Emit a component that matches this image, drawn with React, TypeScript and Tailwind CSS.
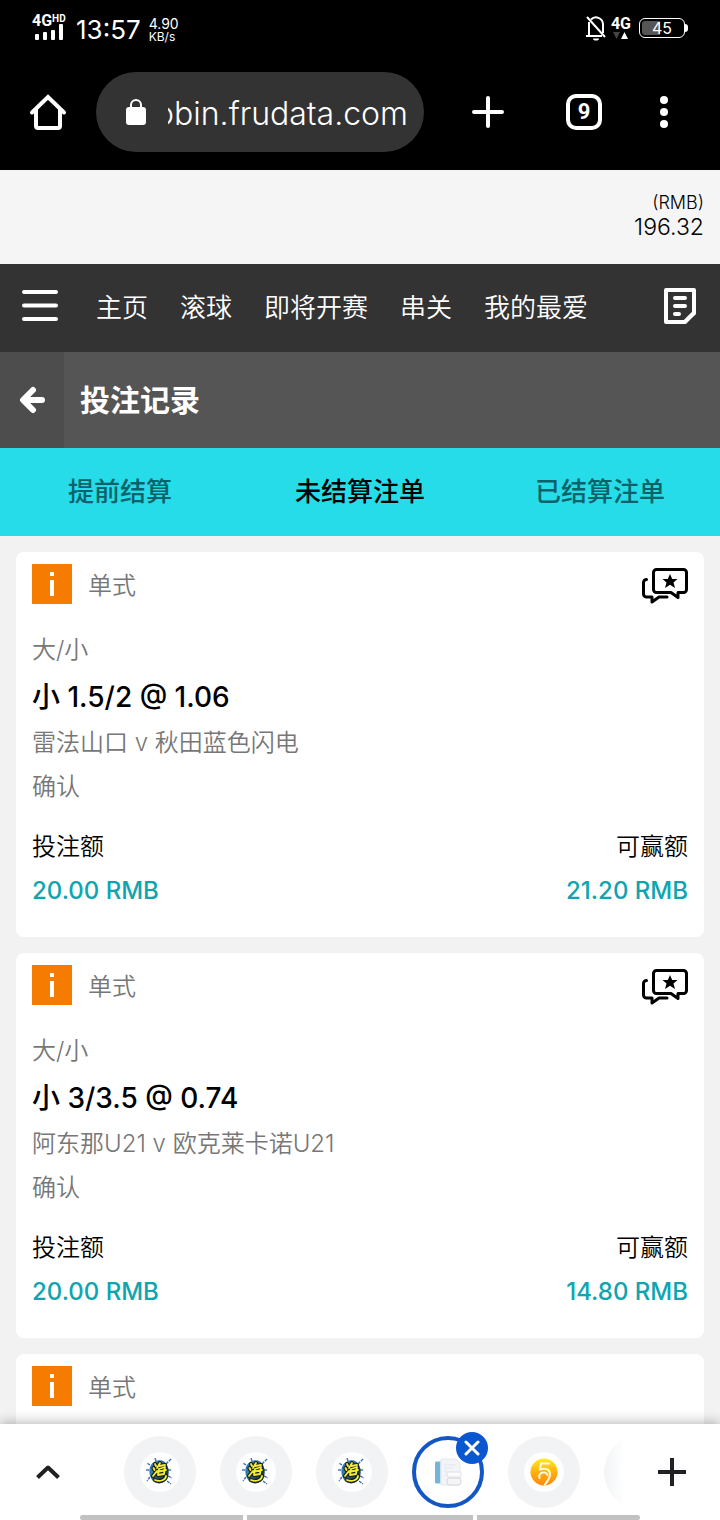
import type { ReactNode } from "react";

type Bet = {
  id: number;
  type: string;
  market: string;
  pick: string;
  match: string;
  status: string;
  stake: string;
  win: string;
};

const bets: Bet[] = [
  {
    id: 1,
    type: "单式",
    market: "大/小",
    pick: "小 1.5/2 @ 1.06",
    match: "雷法山口 v 秋田蓝色闪电",
    status: "确认",
    stake: "20.00 RMB",
    win: "21.20 RMB",
  },
  {
    id: 2,
    type: "单式",
    market: "大/小",
    pick: "小 3/3.5 @ 0.74",
    match: "阿东那U21 v 欧克莱卡诺U21",
    status: "确认",
    stake: "20.00 RMB",
    win: "14.80 RMB",
  },
];

const navItems = ["主页", "滚球", "即将开赛", "串关", "我的最爱"];
const tabs = ["提前结算", "未结算注单", "已结算注单"];

function StatusBar() {
  return (
    <div className="flex h-14 items-center justify-between px-8 text-white">
      <div className="flex items-center">
        <div className="flex w-9 flex-col">
          <div className="flex h-3 items-start font-['Roboto'] font-bold">
            <span className="text-[16px] leading-3">4G</span>
            <span className="text-[10px] leading-2">HD</span>
          </div>
          <svg width="36" height="14" viewBox="0 0 36 14" fill="#fff" className="overflow-visible">
            <rect x="3" y="7" width="4" height="6" rx="1" />
            <rect x="11" y="5" width="4" height="8" rx="1" />
            <rect x="19" y="3" width="4" height="10" rx="1" />
            <rect x="27" y="-3" width="4" height="16" rx="1" />
          </svg>
        </div>
        <span className="ml-2 mt-1 text-[26px] leading-7">13:57</span>
        <div className="ml-2 mt-1 flex flex-col">
          <span className="text-[14px] leading-[13px]">4.90</span>
          <span className="text-[12px] leading-[13px]">KB/s</span>
        </div>
      </div>
      <div className="flex items-center gap-1">
        <svg width="22" height="26" viewBox="0 0 22 26" fill="none" stroke="#fff" strokeWidth="2">
          <path d="M6 4.500A7 7 0 0 1 18 9v9M4 7v13M1 21h16M2 2l18 20" />
          <path d="M8 23.500h6a3 2 0 0 1-6 0z" fill="#fff" stroke="none" />
        </svg>
        <div className="flex flex-col items-center">
          <span className="font-['Roboto'] text-[16px] font-bold leading-4">4G</span>
          <svg width="16" height="8" viewBox="0 0 16 8">
            <path d="M0 0h7L3.500 7z" fill="#444" />
            <path d="M8 7h7L11.500 0z" fill="#fff" />
          </svg>
        </div>
        <div className="ml-1 flex items-center">
          <div className="flex h-5 w-[46px] items-center justify-center rounded-md border border-white bg-linear-to-r from-[#555] from-45% to-black to-45% bg-clip-content p-[2px] text-[16px] leading-4">
            45
          </div>
          <div className="h-2 w-[3px] rounded-r-sm bg-white" />
        </div>
      </div>
    </div>
  );
}

function BrowserBar() {
  return (
    <div className="flex h-[114px] items-start pt-4 text-white">
      <div className="flex h-20 w-full items-center">
        <button aria-label="Home" className="flex w-24 shrink-0 justify-center">
          <svg width="38" height="38" viewBox="0 0 38 38" fill="none" stroke="#fff" strokeWidth="4" strokeLinecap="round">
            <path d="M3 19.500L19 4l16 15.500" strokeLinejoin="miter" />
            <path d="M7 17v16a2 2 0 0 0 2 2h20a2 2 0 0 0 2-2V17" />
          </svg>
        </button>
        <div className="flex h-20 min-w-0 flex-1 items-center rounded-full bg-[#333] pl-[30px] pr-4">
          <svg width="20" height="28" viewBox="0 0 20 28" className="shrink-0">
            <rect y="9" width="20" height="18" rx="3" fill="#fff" />
            <path d="M5 10V7a5 5 0 0 1 10 0v3" fill="none" stroke="#fff" strokeWidth="2" />
          </svg>
          <input
            aria-label="Address"
            dir="rtl"
            defaultValue="robin.frudata.com"
            className="ml-[22px] w-0 min-w-0 flex-1 bg-transparent pt-1 text-[32px] font-light leading-10 outline-none"
          />
        </div>
        <button aria-label="New tab" className="ml-4 flex w-24 shrink-0 justify-center">
          <svg width="32" height="32" viewBox="0 0 32 32" stroke="#fff" strokeWidth="4" strokeLinecap="round">
            <path d="M2 16h28M16 2v28" />
          </svg>
        </button>
        <button className="flex w-24 shrink-0 justify-center" aria-label="9 open tabs">
          <span className="flex size-9 items-center justify-center rounded-[10px] border-4 border-white font-['Roboto'] text-[22px] font-bold leading-7">
            9
          </span>
        </button>
        <button aria-label="More" className="mr-6 flex w-16 shrink-0 justify-center">
          <svg width="8" height="32" viewBox="0 0 8 32" fill="#fff">
            <circle cx="4" cy="4" r="4" />
            <circle cx="4" cy="16" r="4" />
            <circle cx="4" cy="28" r="4" />
          </svg>
        </button>
      </div>
    </div>
  );
}

function SiteNav() {
  return (
    <nav className="flex h-[88px] items-center bg-[#333] text-white">
      <button aria-label="Menu" className="flex w-20 shrink-0 justify-center pb-1">
        <svg width="36" height="32" viewBox="0 0 36 32" stroke="#fff" strokeWidth="4" strokeLinecap="round">
          <path d="M2 2h32M2 15.500h32M2 29h32" />
        </svg>
      </button>
      <div className="ml-4 flex flex-1 gap-8 whitespace-nowrap text-[26px] font-[350] leading-10">
        {navItems.map((item) => (
          <a key={item} href="#">
            {item}
          </a>
        ))}
      </div>
      <button aria-label="投注单" className="mr-6 shrink-0 pb-1">
        <svg width="32" height="36" viewBox="0 0 32 36" fill="none" stroke="#fff" strokeWidth="4">
          <path d="M2 2h28v23l-9 9H2z" strokeLinejoin="round" />
          <path d="M20 36v-4l8-8h4v2z" fill="#fff" stroke="none" />
          <path d="M11 10h10M11 18h10M11 26h4" strokeLinecap="round" />
        </svg>
      </button>
    </nav>
  );
}

function PageTitle() {
  return (
    <div className="flex h-24 items-center bg-[#555] text-white">
      <button aria-label="返回" className="flex h-full w-16 items-center justify-center bg-[#4d4d4d]">
        <svg width="26" height="28" viewBox="0 0 26 28" fill="none" stroke="#fff" strokeWidth="6" strokeLinecap="round" strokeLinejoin="round">
          <path d="M14 4L4 14l10 10M5 14h18" />
        </svg>
      </button>
      <h1 className="ml-4 text-[30px] font-bold leading-10">投注记录</h1>
    </div>
  );
}

function Row({ children }: { children: ReactNode }) {
  return <div className="flex h-11 items-center justify-between">{children}</div>;
}

function CardHeader({ type, share = false }: { type: string; share?: boolean }) {
  return (
    <div className="flex h-10 items-center">
      <svg width="40" height="40" viewBox="0 0 40 40">
        <rect width="40" height="40" fill="#f57c00" />
        <path d="M18 8h4v4h-4zM18 16h4v16h-4z" fill="#fff" />
      </svg>
      <span className="ml-4 flex-1 pt-1 font-[350] text-[#777]">{type}</span>
      {share && (
        <button aria-label="推荐" className="pt-1">
          <svg width="46" height="36" viewBox="0 0 46 36" fill="none" stroke="#000" strokeWidth="3" strokeLinecap="round" strokeLinejoin="round">
            <path d="M14.500 1.500h27a3 3 0 0 1 3 3v17a3 3 0 0 1-3 3h-5.500v5l-7-5H14.500a3 3 0 0 1-3-3v-17a3 3 0 0 1 3-3z" />
            <path d="M4.500 11.500a3 3 0 0 0-3 3V26a3 3 0 0 0 3 3H10v5l7-5h8" />
            <path d="M28 6l2.200 5h5.300l-4 3.600 1.500 5.400-5-3.200-5 3.200 1.500-5.400-4-3.600h5.300z" fill="#000" stroke="none" />
          </svg>
        </button>
      )}
    </div>
  );
}

function BetCard({ bet }: { bet: Bet }) {
  return (
    <article className="rounded-lg bg-white px-4 pb-6 pt-3">
      <CardHeader type={bet.type} share />
      <div className="mt-6 font-[350] text-[#777]">
        <Row>{bet.market}</Row>
        <h2 className="flex h-[49px] items-center text-[28px] font-medium text-black">{bet.pick}</h2>
        <Row>{bet.match}</Row>
        <Row>{bet.status}</Row>
      </div>
      <div className="mt-4 font-[350]">
        <Row>
          <span>投注额</span>
          <span>可赢额</span>
        </Row>
        <div className="flex h-11 items-center justify-between font-medium text-[#0ea5b0]">
          <span>{bet.stake}</span>
          <span>{bet.win}</span>
        </div>
      </div>
    </article>
  );
}

function SplashIcon() {
  return (
    <svg width="28" height="28" viewBox="0 0 28 28">
      <defs>
        <linearGradient id="splash" x1="0" y1="0" x2="1" y2="1">
          <stop offset="0.350" stopColor="#3577b5" />
          <stop offset="0.900" stopColor="#14202e" />
        </linearGradient>
      </defs>
      <path d="M20 6l5-5M4 7L1 5M4 19l-3 4M22 18l4 2M10 3L9 0M22 12h4M3 12H0M21 23l4 3" stroke="#3f74b5" strokeWidth="1.500" strokeDasharray="3 1" />
      <path d="M8 4c5-3 11-2 13 3 3 5 2 14-3 17-5 3-11 1-13-4C2 14 3 7 8 4z" fill="url(#splash)" />
      <g fill="none" strokeLinecap="round" strokeLinejoin="round">
        <g stroke="#16201c" strokeWidth="4">
          <path d="M9 6l1 2M7.500 10l1 2M7 18l4-5M14 5l-3 5M13 8l6-1M13 11l-1 6 6-1 1-7-6 2M11 14l9-2M9 22c5 2 11 0 11-4" />
        </g>
        <g stroke="#f6ee34" strokeWidth="1.800">
          <path d="M9 6l1 2M7.500 10l1 2M7 18l4-5M14 5l-3 5M13 8l6-1M13 11l-1 6 6-1 1-7-6 2M11 14l9-2M9 22c5 2 11 0 11-4" />
        </g>
      </g>
    </svg>
  );
}

function PagesIcon() {
  return (
    <svg width="28" height="28" viewBox="0 0 28 28">
      <rect x="1" y="3" width="8" height="23" rx="2" fill="#b9dcec" />
      <rect x="1" y="4" width="5" height="21" rx="1" fill="#74b4d6" />
      <path d="M7 1h15l4 4v20a2 2 0 0 1-2 2H7z" fill="#f3f4f8" stroke="#e6e8ee" />
      <path d="M10 7h12M10 10h9M10 13h3" stroke="#e2e5ea" />
      <rect x="13" y="14" width="14" height="5" rx="1" fill="#fbfbfd" stroke="#dfe1e6" />
      <rect x="13" y="20" width="14" height="7" rx="3" fill="#f5f5f7" stroke="#d6d6dc" />
    </svg>
  );
}

function CoinIcon() {
  return (
    <svg width="28" height="28" viewBox="0 0 28 28">
      <defs>
        <linearGradient id="coin" x1="0" y1="0" x2="0" y2="1">
          <stop offset="0" stopColor="#ffec1f" />
          <stop offset="0.500" stopColor="#ffb010" />
          <stop offset="1" stopColor="#ff8a0a" />
        </linearGradient>
      </defs>
      <circle cx="14" cy="14" r="13.500" fill="url(#coin)" />
      <path
        d="M19 5.500h-8l-1 6c6-2 10 0 10 5 0 4-3 7-5 10M9.500 20c-2-5 6-8 8-3"
        fill="none"
        stroke="#fffbe0"
        strokeWidth="2"
        strokeLinecap="round"
      />
    </svg>
  );
}

function TabBubble({ label, children }: { label: string; children?: ReactNode }) {
  return (
    <button aria-label={label} className="flex size-18 shrink-0 items-center justify-center rounded-full bg-[#f1f3f5]">
      <span className="flex size-10 items-center justify-center rounded-full bg-white">{children}</span>
    </button>
  );
}

function TabStrip() {
  return (
    <footer className="relative z-10 flex h-24 shrink-0 items-start bg-white pt-3 shadow-[0_-1px_12px_rgba(0,0,0,0.3)]">
      <button aria-label="Expand tabs" className="flex h-18 w-24 shrink-0 items-center justify-center">
        <svg width="24" height="16" viewBox="0 0 24 16" fill="none" stroke="#202124" strokeWidth="4">
          <path d="M1.500 13.500L12 3.500l10.500 10" strokeLinejoin="round" />
        </svg>
      </button>
      <div className="relative min-w-0 flex-1">
        <div className="-mt-3 flex gap-6 overflow-hidden pl-7 pt-3">
          <TabBubble label="Tab 1">
            <SplashIcon />
          </TabBubble>
          <TabBubble label="Tab 2">
            <SplashIcon />
          </TabBubble>
          <TabBubble label="Tab 3">
            <SplashIcon />
          </TabBubble>
          <div className="relative shrink-0">
            <button aria-label="Tab 4" className="flex size-18 items-center justify-center rounded-full border-4 border-[#1257c5] bg-white">
              <PagesIcon />
            </button>
            <button aria-label="Close tab" className="absolute -right-1 -top-1 flex size-8 items-center justify-center rounded-full bg-[#0b57d0]">
              <svg width="16" height="16" viewBox="0 0 16 16" stroke="#fff" strokeWidth="3" strokeLinecap="round">
                <path d="M2 2l12 12M14 2L2 14" />
              </svg>
            </button>
          </div>
          <TabBubble label="Tab 5">
            <CoinIcon />
          </TabBubble>
          <TabBubble label="Tab 6" />
        </div>
        <div className="absolute bottom-0 right-0 top-0 w-5 bg-linear-to-r from-transparent to-white" />
      </div>
      <button aria-label="New tab" className="flex h-18 w-24 shrink-0 items-center justify-center">
        <svg width="28" height="28" viewBox="0 0 28 28" stroke="#202124" strokeWidth="4">
          <path d="M0 14h28M14 0v28" />
        </svg>
      </button>
      <div className="absolute inset-x-20 bottom-0 flex h-[5px] gap-1">
        <div className="flex-[163] rounded-l-full bg-[#c1c1c1]" />
        <div className="flex-[226] bg-[#c1c1c1]" />
        <div className="flex-[163] rounded-r-full bg-[#c1c1c1]" />
      </div>
    </footer>
  );
}

export default function App() {
  return (
    <div className="flex h-screen flex-col bg-[#f2f2f2] font-['Inter','Noto_Sans_CJK_SC',sans-serif] text-[24px] leading-8 text-black">
      <header className="shrink-0">
        <div className="bg-black">
          <StatusBar />
          <BrowserBar />
        </div>
        <div className="flex h-[94px] flex-col items-end justify-center bg-[#f5f5f5] pb-1 pr-4 font-light">
          <span className="text-[18px] leading-6">(RMB)</span>
          <span className="text-[23px] leading-6">196.32</span>
        </div>
        <SiteNav />
        <PageTitle />
        <div role="tablist" className="grid h-[88px] grid-cols-3 bg-[#25dce8] text-[26px] font-medium">
          {tabs.map((tab, i) => (
            <button key={tab} role="tab" aria-selected={i === 1} className={i === 1 ? "text-black" : "text-[#0b626a]"}>
              {tab}
            </button>
          ))}
        </div>
      </header>
      <main className="flex min-h-0 flex-1 flex-col gap-4 overflow-y-auto px-4 pt-4 [scrollbar-width:none]">
        {bets.map((bet) => (
          <BetCard key={bet.id} bet={bet} />
        ))}
        <article className="rounded-t-lg bg-white px-4 pb-6 pt-3">
          <CardHeader type="单式" />
        </article>
      </main>
      <TabStrip />
    </div>
  );
}
